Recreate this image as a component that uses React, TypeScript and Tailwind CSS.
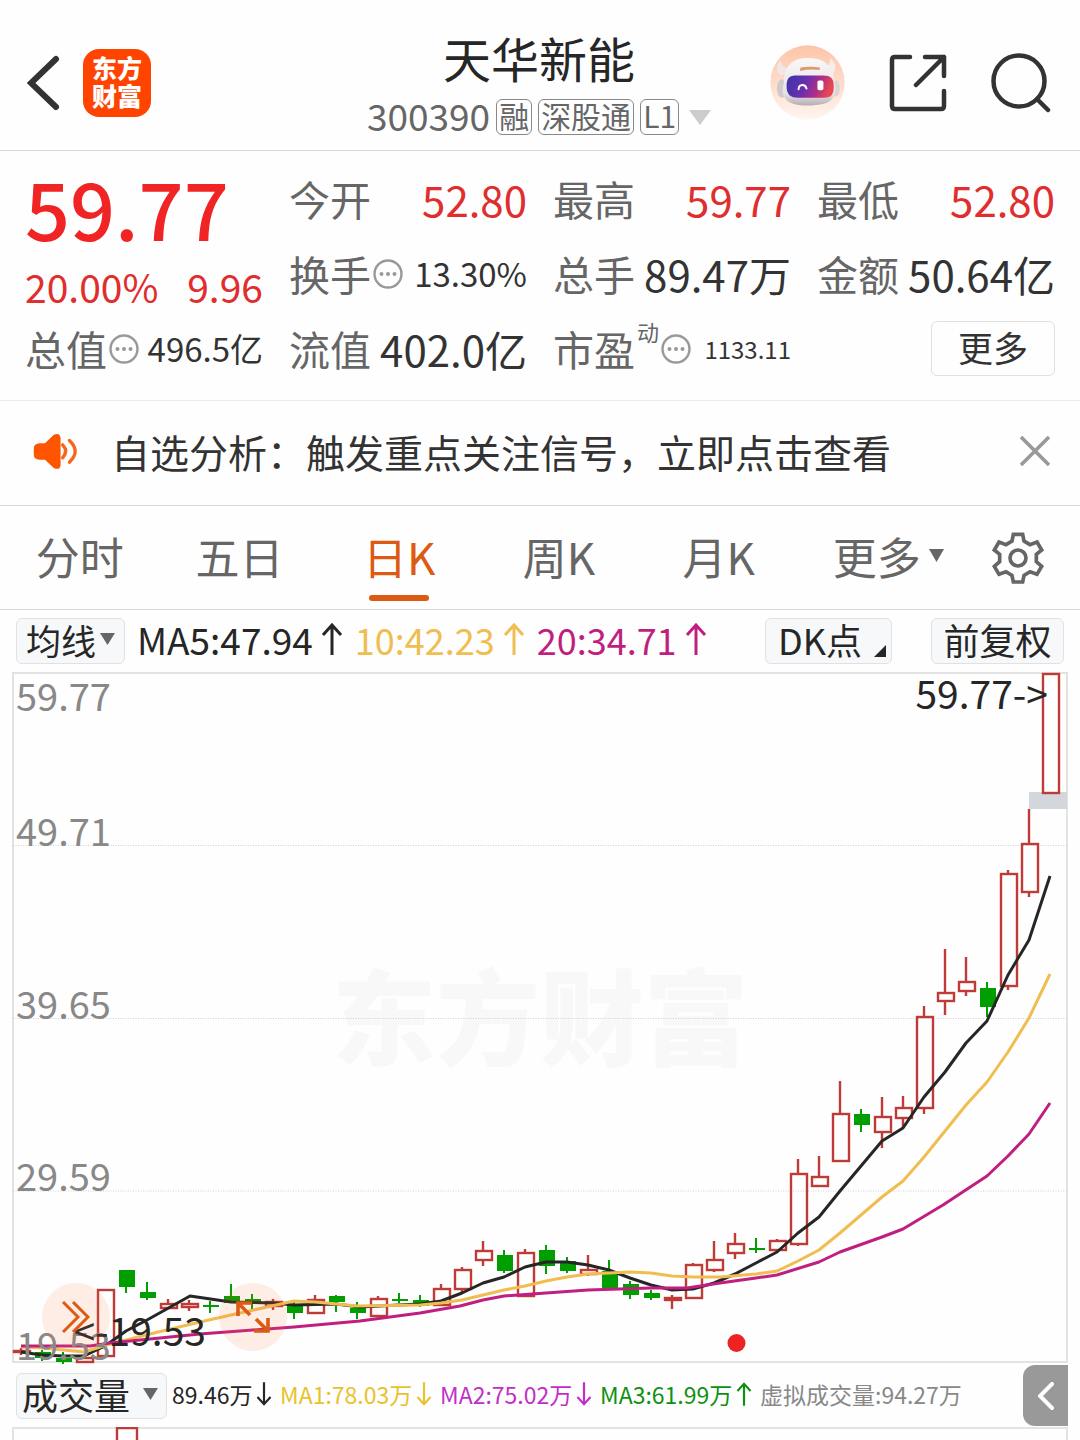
import React from "react";

type Candle = [high: number, top: number, bottom: number, low: number, up: 0 | 1];

const STEP = 21;
const FIRST_X = 21;

const candles: Candle[] = [
  [1348, 1350, 1353, 1355, 1],
  [1350, 1352, 1358, 1361, 0],
  [1352, 1358, 1362, 1364, 0],
  [1357, 1357, 1363, 1363, 1],
  [1289, 1289, 1357, 1357, 1],
  [1270, 1270, 1287, 1293, 0],
  [1282, 1292, 1298, 1300, 0],
  [1299, 1303, 1309, 1309, 1],
  [1300, 1303, 1308, 1311, 1],
  [1301, 1305, 1307, 1313, 0],
  [1284, 1296, 1303, 1303, 0],
  [1294, 1299, 1304, 1309, 0],
  [1299, 1301, 1307, 1310, 1],
  [1300, 1304, 1313, 1319, 0],
  [1295, 1299, 1314, 1314, 1],
  [1295, 1296, 1302, 1312, 0],
  [1302, 1308, 1313, 1319, 0],
  [1296, 1298, 1317, 1317, 1],
  [1293, 1299, 1301, 1303, 0],
  [1295, 1300, 1306, 1307, 0],
  [1284, 1288, 1306, 1306, 1],
  [1267, 1269, 1290, 1293, 1],
  [1241, 1250, 1261, 1266, 1],
  [1250, 1255, 1271, 1273, 0],
  [1249, 1252, 1297, 1297, 1],
  [1245, 1250, 1266, 1274, 0],
  [1257, 1261, 1271, 1273, 0],
  [1255, 1269, 1275, 1276, 1],
  [1260, 1271, 1289, 1289, 0],
  [1281, 1284, 1295, 1299, 0],
  [1290, 1293, 1298, 1300, 0],
  [1295, 1297, 1301, 1309, 1],
  [1263, 1264, 1299, 1299, 1],
  [1241, 1259, 1271, 1272, 1],
  [1233, 1243, 1254, 1259, 1],
  [1238, 1248, 1250, 1253, 0],
  [1239, 1240, 1251, 1251, 1],
  [1159, 1173, 1245, 1246, 1],
  [1156, 1176, 1187, 1187, 1],
  [1081, 1113, 1162, 1162, 1],
  [1109, 1114, 1125, 1132, 0],
  [1097, 1116, 1133, 1148, 1],
  [1096, 1107, 1119, 1128, 1],
  [1006, 1016, 1109, 1114, 1],
  [949, 992, 1002, 1015, 1],
  [957, 981, 992, 996, 1],
  [982, 988, 1007, 1017, 0],
  [870, 873, 987, 990, 1],
  [809, 843, 893, 897, 1],
  [673, 673, 794, 794, 1],
];

const ma5 =
  "21,1352 42,1355 63,1356 84,1356 105,1346 126,1331 147,1320 190,1296 231,1302 273,1303 294,1305 336,1304 360,1307 399,1305 420,1304 441,1301 462,1293 483,1283 504,1277 525,1267 546,1262 567,1262 588,1265 609,1270 630,1278 651,1285 672,1290 693,1289 714,1283 735,1274 756,1263 777,1252 798,1233 819,1217 840,1191 861,1166 882,1141 903,1128 924,1097 945,1072 966,1043 987,1021 1008,975 1029,940 1050,876";
const ma10 =
  "21,1347 42,1348 84,1352 110,1344 150,1334 200,1322 231,1315 294,1301 315,1302 357,1306 420,1305 441,1303 462,1300 483,1295 504,1290 525,1286 546,1281 567,1277 588,1274 609,1273 630,1272 651,1273 672,1276 693,1277 720,1277 756,1274 777,1271 798,1261 819,1250 840,1233 882,1197 903,1181 924,1157 966,1105 987,1082 1008,1052 1029,1018 1050,974";
const ma20 =
  "21,1346 90,1346 110,1343 200,1334 294,1327 360,1321 420,1313 460,1306 483,1300 504,1296 546,1293 588,1290 651,1288 687,1288 720,1283 756,1278 777,1275 819,1262 840,1252 882,1237 903,1229 943,1205 987,1176 1008,1156 1029,1134 1050,1103";

const priceLabels: [string, number][] = [
  ["59.77", 711],
  ["49.71", 846],
  ["39.65", 1019],
  ["29.59", 1191],
  ["19.53", 1360],
];

function Triangle({ className }: { className: string }) {
  return (
    <svg viewBox="0 0 16 14" className={className} preserveAspectRatio="none" aria-hidden="true">
      <path d="M0 0H16L8 14Z" fill="currentColor" />
    </svg>
  );
}

function Arrow({ down, className }: { down?: boolean; className: string }) {
  return (
    <svg viewBox="0 0 22 32" className={className} fill="none" stroke="currentColor" strokeWidth="3" aria-hidden="true">
      {down ? <path d="M11 0V30M2 20L11 30L20 20" /> : <path d="M11 32V2M2 12L11 2L20 12" />}
    </svg>
  );
}

function Info() {
  return (
    <svg viewBox="0 0 30 30" className="ml-[2px] size-[30px] shrink-0 text-[#999]" aria-hidden="true">
      <circle cx="15" cy="15" r="13.5" fill="none" stroke="currentColor" strokeWidth="2.4" />
      <circle cx="8.5" cy="15" r="2" fill="currentColor" />
      <circle cx="15" cy="15" r="2" fill="currentColor" />
      <circle cx="21.5" cy="15" r="2" fill="currentColor" />
    </svg>
  );
}

function Robot() {
  return (
    <svg viewBox="62 47 226 226" className="size-[75px]" aria-hidden="true">
      <defs>
        <linearGradient id="halo" x1="0" y1="0" x2="0" y2="1">
          <stop offset="0" stopColor="#fdc5a8" />
          <stop offset="0.6" stopColor="#fee0d1" />
          <stop offset="1" stopColor="#fff6f1" />
        </linearGradient>
        <linearGradient id="shell" x1="0" y1="0" x2="0" y2="1">
          <stop offset="0" stopColor="#fbf8f8" />
          <stop offset="0.75" stopColor="#e6e1e4" />
          <stop offset="1" stopColor="#b5aeb3" />
        </linearGradient>
        <linearGradient id="visor" x1="0" y1="0" x2="1" y2="0.2">
          <stop offset="0" stopColor="#3a35a8" />
          <stop offset="0.45" stopColor="#6a2fae" />
          <stop offset="0.75" stopColor="#b02f86" />
          <stop offset="1" stopColor="#e8484f" />
        </linearGradient>
      </defs>
      <circle cx="175" cy="160" r="112" fill="url(#halo)" />
      <path d="M94 92C80 104 78 132 98 140L122 118C104 116 94 106 94 92Z" fill="#efe6e6" />
      <path d="M242 86C262 98 264 124 248 136L224 116C242 112 246 100 242 86Z" fill="#f6eeee" />
      <ellipse cx="98" cy="178" rx="15" ry="28" fill="#cfc8cc" />
      <ellipse cx="260" cy="178" rx="12" ry="24" fill="#d9d3d6" />
      <path
        d="M104 160C102 112 130 84 178 86C226 86 254 112 256 156C268 190 252 218 224 224C190 232 150 232 122 220C100 208 96 186 104 160Z"
        fill="url(#shell)"
      />
      <path d="M154 115Q182 110 212 115V122Q182 119 152 125Z" fill="#d99a6c" />
      <path d="M112 172C112 142 124 138 148 139H222C246 139 256 148 254 178C252 202 242 206 218 206H148C124 206 112 196 112 172Z" fill="url(#visor)" />
      <path d="M148 180C150 164 168 164 172 178" fill="none" stroke="#fff" strokeWidth="6" strokeLinecap="round" />
      <rect x="205" y="154" width="18" height="29" rx="5" fill="#fff" />
    </svg>
  );
}

function Stat({
  label,
  value,
  size = "text-[42px]",
  color = "text-[#333]",
  info,
  sup,
}: {
  label: string;
  value: string;
  size?: string;
  color?: string;
  info?: boolean;
  sup?: string;
}) {
  return (
    <dl className="flex h-[75px] items-center justify-between whitespace-nowrap">
      <dt className="flex items-center text-[41px] text-[#666]">
        {label}
        {sup && <sup className="top-0 ml-[2px] mb-9 text-[22px] leading-none">{sup}</sup>}
        {info && <Info />}
      </dt>
      <dd className={`${size} ${color}`}>{value}</dd>
    </dl>
  );
}

function Chart() {
  return (
    <svg viewBox="0 672 1080 692" className="block w-full" role="img" aria-label="日K线图">
      <path d="M13 673H1067V1362H13Z" fill="none" stroke="#e3e3e3" strokeWidth="2" />
      <text x="540" y="1058" textAnchor="middle" fontSize="104" fontWeight="900" fill="#f8f8f8">
        东方财富
      </text>
      <path d="M13 845.5H1067M13 1018.5H1067M13 1191H1067" stroke="#d0d0d0" strokeWidth="1" strokeDasharray="1 1.5" />
      <rect x="1029" y="792" width="38" height="17" fill="#d3d6db" />
      {candles.map(([high, top, bottom, low, up], i) => {
        const x = FIRST_X + STEP * i;
        return up ? (
          <g key={i} fill={i === 49 ? "#fff" : "none"} stroke="#bf3b38" strokeWidth="2.4">
            <path d={`M${x} ${high}V${top}M${x} ${bottom}V${low}`} />
            <rect x={x - 7} y={top + 1} width="16" height={Math.max(bottom - top - 2, 1)} />
          </g>
        ) : (
          <g key={i} fill="#009e00">
            <rect x={x - 1} y={high} width="2" height={low - high} />
            <rect x={x - 7} y={top} width="16" height={bottom - top} />
          </g>
        );
      })}
      <g fill="none" strokeWidth="3" strokeLinejoin="round">
        <polyline points={ma5} stroke="#262626" />
        <polyline points={ma10} stroke="#f0bd50" />
        <polyline points={ma20} stroke="#c01f80" />
      </g>
      <circle cx="736.5" cy="1343" r="9" fill="#ee2222" />
      <g fontSize="38" fill="#888">
        {priceLabels.map(([text, y]) => (
          <text key={text} x="16" y={y}>
            {text}
          </text>
        ))}
      </g>
      <g fontSize="39" fill="#262626">
        <text x="1048" y="709" textAnchor="end">
          59.77-&gt;
        </text>
        <text x="206" y="1346" textAnchor="end">
          &lt;-19.53
        </text>
      </g>
    </svg>
  );
}

const tabs = ["分时", "五日", "日K", "周K", "月K"];
const chip =
  "flex h-[46px] items-center rounded-md border border-[#dfe1e5] bg-[#f7f8fa] pb-1 text-[36px] leading-none text-[#262626] whitespace-nowrap";
const tag = "flex h-9 items-center rounded-md border border-[#888] px-[2px] pb-1";
const legend = "flex items-center gap-2 pb-1";
const volume = "flex items-center gap-1 pb-[3px]";

export default function App() {
  return (
    <main className="min-h-screen overflow-hidden bg-[#fefefe] font-['Noto_Sans_CJK_SC',sans-serif] leading-none">
      <header className="grid grid-cols-[1fr_auto_1fr] items-center border-b border-[#d8d8d8] pt-[30px] pr-[29px] pb-[15px] pl-[27px]">
        <div className="flex items-center gap-[22px]">
          <button aria-label="返回">
            <svg viewBox="0 0 34 56" className="h-14 w-[34px]" fill="none" stroke="#333" strokeWidth="6" aria-hidden="true">
              <path d="M29 4L4 28L29 52" strokeLinecap="round" />
            </svg>
          </button>
          <a
            href="#home"
            aria-label="东方财富"
            className="flex size-[68px] flex-col items-center justify-center rounded-2xl bg-[#ff4400] pb-[3px] text-[25px] leading-7 font-black text-white"
          >
            <span>东方</span>
            <span>财富</span>
          </a>
        </div>
        <div className="flex flex-col items-center gap-[14px]">
          <h1 className="text-[48px] leading-[55px] text-[#262626]">天华新能</h1>
          <button className="flex h-9 items-center gap-[6px] text-[30px] leading-none text-[#666]">
            <span className="pb-[3px] text-[37px]">300390</span>
            <span className={tag}>融</span>
            <span className={tag}>深股通</span>
            <span className={tag}>L1</span>
            <Triangle className="ml-1 h-[15px] w-[22px] text-[#ccc]" />
          </button>
        </div>
        <div className="flex items-center justify-end gap-[44px]">
          <button aria-label="智能助手">
            <Robot />
          </button>
          <button aria-label="分享">
            <svg viewBox="0 0 58 58" className="size-[58px]" fill="none" stroke="#333" strokeWidth="4.5" strokeLinecap="round" strokeLinejoin="round" aria-hidden="true">
              <path d="M21 3H6Q3 3 3 6V52Q3 55 6 55H52Q55 55 55 52V37M36 3H55V22M55 3L27 31" />
            </svg>
          </button>
          <button aria-label="搜索">
            <svg viewBox="0 0 60 60" className="size-[60px]" fill="none" stroke="#333" strokeWidth="4.5" strokeLinecap="round" aria-hidden="true">
              <circle cx="28" cy="28" r="25.5" />
              <path d="M46 46L57 57" />
            </svg>
          </button>
        </div>
      </header>

      <section className="grid grid-cols-4 gap-x-[26px] border-b border-[#ececec] pt-[10px] pr-[25px] pb-[14px] pl-[25px]">
        <div className="row-span-2 whitespace-nowrap">
          <p className="pt-1 text-[79px] leading-[84px] font-medium text-[#f02424]">59.77</p>
          <p className="mt-3 flex justify-between text-[39px] leading-[50px] text-[#e02d2d]">
            <span>20.00%</span>
            <span>9.96</span>
          </p>
        </div>
        <Stat label="今开" value="52.80" color="text-[#e02d2d]" />
        <Stat label="最高" value="59.77" color="text-[#e02d2d]" />
        <Stat label="最低" value="52.80" color="text-[#e02d2d]" />
        <Stat label="换手" value="13.30%" size="text-[33px]" info />
        <Stat label="总手" value="89.47万" />
        <Stat label="金额" value="50.64亿" />
        <Stat label="总值" value="496.5亿" size="text-[33px]" info />
        <Stat label="流值" value="402.0亿" />
        <Stat label="市盈" value="1133.11" size="text-[24px]" sup="动" info />
        <div className="flex h-[75px] items-center justify-end">
          <button className="h-[55px] w-[124px] rounded-md border border-[#e0e0e0] pb-1 text-[35px] leading-none text-[#333]">更多</button>
        </div>
      </section>

      <section className="flex h-[105px] items-center border-b border-[#d8d8d8] pr-[30px] pb-1 pl-[33px]">
        <svg viewBox="98 100 130 112" className="h-[38px] w-[45px]" aria-hidden="true">
          <path d="M116 133H132L158 108Q176 100 178 118V198Q176 214 158 206L132 182H116Q99 180 99 166V148Q99 134 116 133Z" fill="#ff5500" />
          <path d="M184 138Q202 157 184 176M204 125Q238 157 204 189" fill="none" stroke="#f8651c" strokeWidth="10" strokeLinecap="round" />
        </svg>
        <a href="#analysis" className="ml-[33px] text-[39px] text-[#333] whitespace-nowrap">
          自选分析：触发重点关注信号，立即点击查看
        </a>
        <button aria-label="关闭" className="ml-auto">
          <svg viewBox="0 0 30 30" className="size-[30px]" stroke="#999" strokeWidth="3.6" aria-hidden="true">
            <path d="M1 1L29 29M29 1L1 29" />
          </svg>
        </button>
      </section>

      <nav className="flex h-[104px] border-b border-[#d8d8d8] pr-[22px] text-[44px] text-[#666]">
        {tabs.map((tab) => (
          <button
            key={tab}
            className={
              tab === "日K"
                ? "relative flex-[16] pb-1 text-[#dc5a12] after:absolute after:bottom-2 after:left-1/2 after:h-[6px] after:w-[60px] after:-translate-x-1/2 after:rounded-full after:bg-[#dc5a12]"
                : "flex-[16] pb-1"
            }
          >
            {tab}
          </button>
        ))}
        <button className="flex flex-[18] items-center justify-center gap-2 pb-1">
          更多
          <Triangle className="h-[13px] w-[15px]" />
        </button>
        <button aria-label="设置" className="flex flex-[8] items-center justify-center">
          <svg viewBox="1312 394 154 156" className="size-[52px]" fill="none" stroke="#666" strokeWidth="11" aria-hidden="true">
            <path d="M1375 401H1403L1407 421L1425 432L1446 424L1460 448L1444 461V483L1460 497L1446 521L1425 513L1407 524L1403 544H1375L1371 524L1353 513L1332 521L1318 497L1334 483V461L1318 448L1332 424L1353 432L1371 421Z" />
            <circle cx="1389" cy="472" r="24" />
          </svg>
        </button>
      </nav>

      <section className="flex h-[62px] items-center pr-4 pl-4 text-[37px] whitespace-nowrap">
        <button className={`${chip} w-[109px] justify-center gap-1`}>
          <span className="text-[35px]">均线</span>
          <Triangle className="h-3 w-[15px] text-[#666]" />
        </button>
        <span className={`${legend} ml-3 text-[#262626]`}>
          MA5:47.94
          <Arrow className="h-8 w-[22px]" />
        </span>
        <span className={`${legend} ml-3 text-[36px] text-[#f0bd50]`}>
          10:42.23
          <Arrow className="h-8 w-[22px]" />
        </span>
        <span className={`${legend} ml-3 text-[36px] text-[#c01f80]`}>
          20:34.71
          <Arrow className="h-8 w-[22px]" />
        </span>
        <button className={`${chip} ml-auto w-[127px] justify-between pr-[5px] pl-3`}>
          DK点
          <svg viewBox="0 0 12 12" className="mt-6 size-3" aria-hidden="true">
            <path d="M12 0V12H0Z" fill="#262626" />
          </svg>
        </button>
        <button className={`${chip} ml-[39px] w-[133px] justify-center`}>前复权</button>
      </section>

      <div className="relative">
        <Chart />
        <button
          aria-label="快进"
          className="absolute bottom-[13px] left-[42px] flex size-[68px] items-center justify-center rounded-full bg-[#ff7733]/12"
        >
          <svg viewBox="0 0 28 32" className="h-8 w-7" fill="none" stroke="#dc5a12" strokeWidth="3" aria-hidden="true">
            <path d="M1 1L16 16L1 31M11 1L26 16L11 31" />
          </svg>
        </button>
        <button
          aria-label="全屏"
          className="absolute bottom-[13px] left-[219px] flex size-[68px] items-center justify-center rounded-full bg-[#ff7733]/12"
        >
          <svg viewBox="0 0 34 34" className="size-[34px]" fill="none" stroke="#dc5a12" strokeWidth="3.6" aria-hidden="true">
            <path d="M2 16V3H16M2 3L14 15M32 18V31H18M32 31L20 19" />
          </svg>
        </button>
      </div>

      <section className="flex h-[63px] items-center pr-3 pl-4 text-[23px] whitespace-nowrap">
        <button className={`${chip} w-[151px] justify-between pr-2 pl-[5px]`}>
          成交量
          <Triangle className="h-3 w-[15px] text-[#666]" />
        </button>
        <span className={`${volume} ml-[5px] w-[108px] text-[#262626]`}>
          89.46万
          <Arrow down className="h-8 w-4" />
        </span>
        <span className={`${volume} w-40 text-[#e8c22c]`}>
          MA1:78.03万
          <Arrow down className="h-8 w-4" />
        </span>
        <span className={`${volume} w-40 text-[#c22fc8]`}>
          MA2:75.02万
          <Arrow down className="h-8 w-4" />
        </span>
        <span className={`${volume} w-40 text-[#109010]`}>
          MA3:61.99万
          <Arrow className="h-8 w-4" />
        </span>
        <span className="pb-[3px] text-[#888]">虚拟成交量:94.27万</span>
        <button aria-label="展开" className="ml-auto flex h-[61px] w-[45px] items-center justify-center rounded-l-xl bg-[#999]">
          <svg viewBox="0 0 16 28" className="h-7 w-4" fill="none" stroke="#fff" strokeWidth="4" strokeLinecap="round" aria-hidden="true">
            <path d="M14 2L2 14L14 26" />
          </svg>
        </button>
      </section>

      <svg viewBox="0 0 1080 13" className="block w-full" role="img" aria-label="成交量图">
        <path d="M13 14V1H1067V14" fill="none" stroke="#e3e3e3" strokeWidth="2" />
        <path d="M117 14V1H137V14" fill="none" stroke="#bf3b38" strokeWidth="2.4" />
      </svg>
    </main>
  );
}
